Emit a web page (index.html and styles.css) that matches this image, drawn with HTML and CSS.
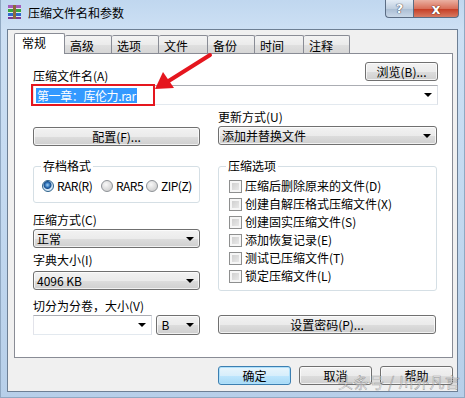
FILE: index.html
```html
<!DOCTYPE html>
<html lang="zh-CN">
<head>
  <meta charset="UTF-8" />
  <title>压缩文件名和参数</title>
  <link rel="stylesheet" href="styles.css">
</head>
<body>
  <div class="window">
    <div class="titlebar">
      <svg class="app-icon" viewBox="0 0 16 16">
        <rect x="1" y="1" width="13" height="4" fill="#a45cbc"/>
        <rect x="1" y="5" width="13" height="4" fill="#3aa43f"/>
        <rect x="1" y="9" width="13" height="4" fill="#2f6acb"/>
        <rect x="1" y="13" width="13" height="2" fill="#7b3a91"/>
        <rect x="1" y="4" width="13" height="1" fill="#e8e0f0"/>
        <rect x="1" y="8" width="13" height="1" fill="#e0f0e0"/>
        <rect x="1" y="12" width="13" height="1" fill="#dce6f6"/>
        <rect x="6" y="1" width="3" height="14" fill="#8b6a3c"/>
      </svg>
      <span class="title">压缩文件名和参数</span>
      <div class="caption">
        <div class="cap cap-help">?</div>
        <div class="cap cap-close">x</div>
      </div>
    </div>

    <div class="client">
      <div class="tabs">
        <div class="tab active">常规</div>
        <div class="tab w47">高级</div>
        <div class="tab w47">选项</div>
        <div class="tab w49">文件</div>
        <div class="tab w47">备份</div>
        <div class="tab w49">时间</div>
        <div class="tab w46">注释</div>
      </div>

      <div class="panel">
        <div class="name-row">
          <span class="label name-label">压缩文件名(A)</span>
          <button class="btn browse">浏览(B)...</button>
        </div>
        <div class="combo edit name-box"><span class="sel">第一章：库伦力.rar</span><i class="arrow"></i></div>

        <div class="cols">
          <div class="col">
            <button class="btn config">配置(F)...</button>
            <fieldset class="group">
              <legend>存档格式</legend>
              <div class="radio-row">
                <label class="radio r1"><i class="dot on"></i>RAR(R)</label>
                <label class="radio r2"><i class="dot"></i>RAR5</label>
                <label class="radio"><i class="dot"></i>ZIP(Z)</label>
              </div>
            </fieldset>
            <div class="label gap10">压缩方式(C)</div>
            <div class="combo">正常<i class="arrow"></i></div>
            <div class="label gap5">字典大小(I)</div>
            <div class="combo gap4">4096 KB<i class="arrow"></i></div>
            <div class="label gap9">切分为分卷，大小(V)</div>
            <div class="split-row">
              <div class="combo edit size-box"><i class="arrow"></i></div>
              <div class="combo unit-box">B<i class="arrow"></i></div>
            </div>
          </div>

          <div class="col">
            <div class="label gap5">更新方式(U)</div>
            <div class="combo">添加并替换文件<i class="arrow"></i></div>
            <fieldset class="group options">
              <legend>压缩选项</legend>
              <label class="check"><i class="box"></i>压缩后删除原来的文件(D)</label>
              <label class="check"><i class="box"></i>创建自解压格式压缩文件(X)</label>
              <label class="check"><i class="box"></i>创建固实压缩文件(S)</label>
              <label class="check"><i class="box"></i>添加恢复记录(E)</label>
              <label class="check"><i class="box"></i>测试已压缩文件(T)</label>
              <label class="check"><i class="box"></i>锁定压缩文件(L)</label>
            </fieldset>
            <button class="btn password">设置密码(P)...</button>
          </div>
        </div>
      </div>

      <div class="dialog-btns">
        <button class="btn dlg default">确定</button>
        <button class="btn dlg">取消</button>
        <button class="btn dlg">帮助</button>
      </div>
    </div>

    <div class="mark"></div>
    <svg class="callout" viewBox="0 0 64 45">
      <line x1="60" y1="5" x2="17" y2="32" stroke="#e5161e" stroke-width="4" stroke-linecap="round"/>
      <polygon points="5,39 13,22 24,38" fill="#e5161e"/>
    </svg>
    <div class="watermark">头条号 / 川外凡言</div>
  </div>
</body>
</html>
```

FILE: styles.css
```css
body {
  margin: 0;
  font: 12px/14px "Noto Sans CJK SC", "Liberation Sans", sans-serif;
  color: #000;
  overflow: hidden;
}
.window {
  position: relative;
  width: 465px;
  height: 398px;
  display: flex;
  flex-direction: column;
  background: linear-gradient(180deg, #c0d7ef 0, #cde0f4 30px, #c3d9f0 200px, #b7cfe9 100%);
  box-shadow: inset 1px 0 #90a8c2, inset -1px 0 #90a8c2, inset 0 -1px #90a8c2;
}

/* title bar */
.titlebar { height: 29px; flex: none; display: flex; align-items: flex-start; }
.app-icon { width: 16px; height: 16px; margin: 4px 0 0 7px; }
.title { margin: 5px 0 0 5px; line-height: 16px; }
.caption { margin-left: auto; margin-right: 6px; display: flex; }
.cap {
  height: 18px;
  box-sizing: border-box;
  border: 1px solid #5b6d84;
  border-top: 0;
  display: flex;
  align-items: center;
  justify-content: center;
  color: #fff;
  font: bold 13px/1 "DejaVu Sans", sans-serif;
}
.cap-help {
  width: 28px;
  border-right: 0;
  border-radius: 0 0 0 4px;
  background: linear-gradient(#e3ecf6, #c0cfdf 50%, #a9bcd2 51%, #c9d8e8);
  text-shadow: 0 0 1px #334, 0 0 1px #334;
}
.cap-close {
  width: 46px;
  border-radius: 0 0 4px 0;
  background: linear-gradient(#eab0a2, #d9705a 50%, #c43b22 51%, #d87a62);
  text-shadow: 0 0 1px #4a1208, 0 0 1px #4a1208;
  font-size: 14px;
}

/* client area */
.client {
  flex: 1;
  margin: 0 7px 6px;
  background: #f0f0f0;
  border: 1px solid #6d7f94;
  padding: 3px 4px 0 6px;
  display: flex;
  flex-direction: column;
}
.tabs { display: flex; align-items: flex-end; height: 20px; position: relative; z-index: 1; }
.tab {
  height: 18px;
  box-sizing: border-box;
  border: 1px solid #898c95;
  border-left: 0;
  border-bottom: 0;
  border-radius: 2px 2px 0 0;
  padding: 3px 0 0 5px;
  background: linear-gradient(#f3f3f3, #ebebeb 50%, #e0e0e0 51%, #d6d6d6);
}
.tab.active {
  width: 51px;
  height: 21px;
  margin-bottom: -1px;
  border-left: 1px solid #898c95;
  background: #fff;
  padding: 2px 0 0 7px;
}
.w46 { width: 46px; }
.w47 { width: 47px; }
.w49 { width: 49px; }

.panel {
  height: 305px;
  box-sizing: border-box;
  background: #fff;
  border: 1px solid #898c95;
  padding: 8px 14px 0 18px;
}

/* controls */
.btn {
  box-sizing: border-box;
  height: 19px;
  padding: 0;
  border: 1px solid #707070;
  border-radius: 3px;
  background: linear-gradient(#f2f2f2, #ebebeb 50%, #dddddd 51%, #cfcfcf);
  box-shadow: inset 0 0 0 1px rgba(255, 255, 255, 0.7);
  font: inherit;
  line-height: 16px;
  color: #000;
  text-align: center;
}
.combo {
  box-sizing: border-box;
  height: 19px;
  margin-top: 2px;
  display: flex;
  align-items: center;
  padding-left: 3px;
  border: 1px solid #707070;
  border-radius: 3px;
  background: linear-gradient(#f2f2f2, #ebebeb 50%, #dddddd 51%, #cfcfcf);
  box-shadow: inset 0 0 0 1px rgba(255, 255, 255, 0.7);
}
.combo.edit {
  border-radius: 0;
  border-color: #abadb3 #dbdfe6 #e3e9ef #e2e3ea;
  background: #fff;
  box-shadow: none;
}
.arrow {
  margin-left: auto;
  margin-right: 5px;
  border-left: 4px solid transparent;
  border-right: 4px solid transparent;
  border-top: 4px solid #000;
}

.name-row { display: flex; justify-content: space-between; align-items: flex-start; }
.name-label { margin-top: 7px; }
.browse { width: 73px; }
.name-box { height: 20px; padding-left: 2px; }
.sel { background: #3399ff; color: #fff; padding: 0 1px; line-height: 15px; letter-spacing: -0.4px; }

.cols { display: grid; grid-template-columns: 167px 219px; column-gap: 18px; }
.col { display: flex; flex-direction: column; }
.config { margin-top: 22px; }
.gap4 { margin-top: 4px; }
.gap5 { margin-top: 5px; }
.gap9 { margin-top: 9px; }
.gap10 { margin-top: 10px; }

.group {
  margin: 13px 0 0;
  padding: 4px 0 7px;
  border: 1px solid #d5dfe5;
  border-radius: 3px;
  min-width: 0;
}
.group legend { margin-left: 7px; padding: 0 2px; line-height: 14px; }
.options { margin-top: 14px; padding-bottom: 5px; }

.radio-row { display: flex; height: 18px; align-items: center; margin-left: 8px; }
.radio { display: flex; align-items: center; gap: 3px; letter-spacing: -0.5px; white-space: nowrap; }
.r1 { width: 59px; }
.r2 { width: 45px; }
.dot {
  flex: none;
  width: 12px;
  height: 12px;
  box-sizing: border-box;
  border-radius: 50%;
  border: 1px solid #8e9297;
  background: radial-gradient(circle at 40% 35%, #f8f8f8, #cfcfcf 80%);
}
.dot.on {
  border-color: #2c628b;
  background: radial-gradient(circle at 45% 40%, #9fd0f5 0, #2b6fb6 2.5px, #1c4f8a 3.5px, #cfe3f4 4.5px, #e6eef6 100%);
}

.check { display: flex; align-items: center; gap: 3px; height: 18px; margin-left: 10px; }
.box {
  width: 13px;
  height: 13px;
  box-sizing: border-box;
  border: 1px solid #8e8f8f;
  background: linear-gradient(135deg, #c9c9c9, #efefef);
  box-shadow: inset 0 0 0 2px #f6f6f6;
}

.split-row { display: flex; gap: 4px; margin-top: 2px; }
.split-row .combo { margin-top: 0; height: 20px; }
.size-box { width: 120px; }
.unit-box { width: 45px; padding-left: 5px; }
.password { margin-top: 24px; width: 218px; }

.dialog-btns { display: flex; justify-content: flex-end; gap: 8px; margin-top: 8px; }
.dlg { width: 73px; }
.default {
  border-color: #3c7fb1;
  background: linear-gradient(#e8f5fc, #d7eefb 50%, #bee6fd 51%, #a7d9f5);
  box-shadow: inset 0 0 0 1px #aee0fb;
}

/* overlays */
.mark {
  position: absolute;
  left: 31px;
  top: 84px;
  width: 124px;
  height: 22px;
  box-sizing: border-box;
  border: 2px solid #e5161e;
}
.callout { position: absolute; left: 150px; top: 50px; width: 64px; height: 45px; }
.watermark {
  position: absolute;
  left: 338px;
  top: 372px;
  font-size: 15px;
  line-height: 20px;
  color: rgba(255, 255, 255, 0.55);
  -webkit-text-stroke: 0.5px rgba(80, 80, 80, 0.55);
  letter-spacing: 0.5px;
}
```
